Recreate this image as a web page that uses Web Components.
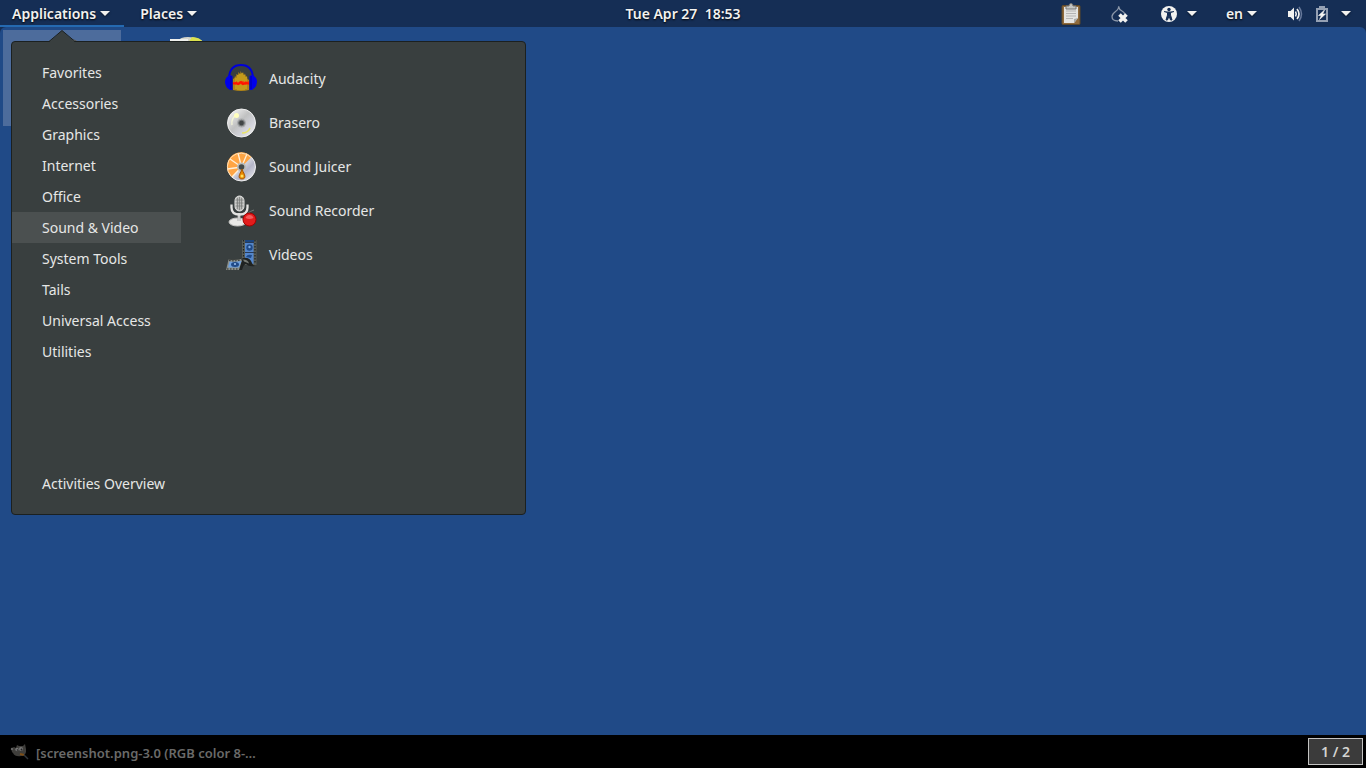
<!DOCTYPE html>
<html lang="en">
<head>
<meta charset="utf-8">
<title>Desktop</title>
<style>
    html, body {
        height: 100%;
        margin: 0;
    }

    body {
        font-family: "Noto Sans", "Open Sans", sans-serif;
        font-size: 14px;
        line-height: 20px;
        color: #e6e7e6;
        background: #204a87;
        --bar: #152e55;
        --menu: #393f3f;
    }
</style>
</head>
<body>
<desktop-shell></desktop-shell>

<script>
const ICONS = {
    clipboard: `<svg width="20" height="22" viewBox="0 0 20 22">
        <rect x="1" y="2.500" width="18" height="19" rx="1" fill="#8f6a3c" stroke="#5f4828"/>
        <path d="M3 4h14v11l-4 5H3z" fill="#e4e4e2"/><path d="M17 15l-4 5v-4z" fill="#a9aaa8"/>
        <path d="M5 8h10M5 10.500h10M5 13h10M5 15.500h7" stroke="#b4b4b4" stroke-width="1"/>
        <path d="M5 6V3h3q0-2.500 2-2.500T12 3h3v3z" fill="#c4c5c2" stroke="#777"/></svg>`,
    onion: `<svg width="20" height="18" viewBox="0 0 20 18">
        <path d="M7.500 1.500c.5 2-1 3.500-3 5S1 9.500 1 11.500C1 14.500 3.500 16 7 16M7.500 1.500C8 4 9 5 11 6s2.500 2 2.800 3" fill="none" stroke="#8b97a9" stroke-width="1.300"/>
        <path d="M8.500 9.500l7 7m0-7l-7 7" stroke="#f2f2f0" stroke-width="3.600"/></svg>`,
    access: `<svg width="16" height="16" viewBox="0 0 16 16">
        <circle cx="8" cy="8" r="8" fill="#f2f2f0"/><circle cx="8" cy="3.500" r="1.700" fill="#152e55"/>
        <path d="M3 5.500l3.500 1v2.500L5 14h1.500L8 10l1.500 4H11L9.500 9V6.500l3.500-1" fill="#152e55" stroke="#152e55"/></svg>`,
    volume: `<svg width="16" height="16" viewBox="0 0 16 16" fill="none" stroke="#f2f2f0">
        <path d="M1 5h2.500L7 1.500v13L3.500 11H1z" fill="#f2f2f0" stroke="none"/>
        <path d="M8.500 5.500q1.500 2.500 0 5" stroke-width="1.500"/><path d="M10 3q4 5 0 10" stroke-width="1.700"/>
        <path d="M12 1q5 7 0 14" stroke="#66789a" stroke-width="1.500"/></svg>`,
    battery: `<svg width="16" height="16" viewBox="0 0 16 16">
        <path d="M5 0h6v2h3v14H2V2h3zM4 4v10h8V4z" fill="#94a0b3" fill-rule="evenodd"/>
        <path d="M10.500 4L4.500 9.500h2.800L5.500 13.500l6-5.500H8.700z" fill="#f5f5f3" stroke="#f5f5f3" stroke-width=".6"/></svg>`,
    audacity: `<svg width="32" height="32" viewBox="0 0 32 32">
        <path d="M8 27V16l1.500-1 .5-2 1 1 .5-3 1.500 1 .5-3 1.500 2 .8-3 1 3 1.200-2 1 3 1-1.500 1 3 1-.5.500 3 1.500 1V27q-8 2-16 0z" fill="#b08416"/>
        <path d="M11 26V15M13 27V12M15 27V11M17 27V10M19 27V12M21 26V14" stroke="#d6b01f"/>
        <path d="M8 19l2 1 1.500-2 1.500 2 2-2 1 1 2-1 1.500 1 1.500-1 1 1 2-1v4l-2-1-1 1-2-1-1.500 1-2-1-1.500 1-2-1-1.500 1-2-1z" fill="#f53a10"/>
        <path d="M8 20.500l3-.5 2 1 3-2 2 2 3-1 3 .5" fill="none" stroke="#ff1500" stroke-width="2"/>
        <path d="M4 15C4.500 6 9 2 16 2s11.500 4 12 13" fill="none" stroke="#0000d8" stroke-width="2"/>
        <path d="M5 12q-5 2-5 7t5 8h2.500V13zM27 12q5 2 5 7t-5 8h-2.500V13z" fill="#0000ed"/><path d="M6 13v13M26 13v13" stroke="#0000a8"/></svg>`,
    brasero: `<svg width="32" height="32" viewBox="0 0 32 32">
        <defs><linearGradient id="silver" x2="1" y2="1"><stop stop-color="#fff"/><stop offset=".45" stop-color="#c0c1c1"/><stop offset=".7" stop-color="#d3d4dc"/><stop offset="1" stop-color="#f2f2ef"/></linearGradient></defs>
        <circle cx="16.500" cy="16" r="14" fill="url(#silver)" stroke="#eee"/>
        <path d="M7 18A9.500 9.500 0 0 1 13 7" fill="none" stroke="#f3f4d8" stroke-width="1.500"/>
        <path d="M17 26q6 0 8-5" fill="none" stroke="#e8e36a" stroke-width="1.500"/>
        <circle cx="11.500" cy="8.500" r="2.500" fill="#ffffbe"/>
        <circle cx="16.500" cy="16" r="4.500" fill="#a8aaac"/><circle cx="16.500" cy="16" r="2.800" fill="#404545" stroke="#727576"/></svg>`,
    juicer: `<svg width="32" height="32" viewBox="0 0 32 32">
        <defs><linearGradient id="disc" x2="1" y2="1"><stop offset=".4" stop-color="#e9e9eb"/><stop offset=".65" stop-color="#b4b5c8"/><stop offset="1" stop-color="#f5f5f5"/></linearGradient></defs>
        <circle cx="16.500" cy="16" r="14" fill="url(#disc)" stroke="#eee"/>
        <path d="M7 26A14 14 0 1 1 26.500 6L16.500 16z" fill="#ffa544"/>
        <path d="M16.500 16L7 26M16.500 16L2.500 18M16.500 16L5 8M16.500 16L13 2M16.500 16L22 3" stroke="#fff0d9" stroke-width="1.300"/>
        <path d="M6 25A13.500 13.500 0 0 1 26 6.500" fill="none" stroke="#ffdfb5"/>
        <circle cx="16.500" cy="16" r="4.500" fill="#b9bbb9"/><circle cx="16.500" cy="16" r="2.800" fill="#454a4a"/>
        <path d="M17 18q-1 3-2.500 5.500Q13 28 17 28t2.500-4.500Q18 21 17 18z" fill="#e88700" stroke="#a55605"/><circle cx="17" cy="25" r="1.500" fill="#ffe05c"/></svg>`,
    recorder: `<svg width="32" height="32" viewBox="0 0 32 32">
        <ellipse cx="12.500" cy="27" rx="8.500" ry="4" fill="#e9e9e7" stroke="#c2c2c0"/>
        <path d="M14 26V18" stroke="#aaa" stroke-width="3"/><path d="M14 26V18" stroke="#eee"/>
        <path d="M6.500 9.500v3q0 7 8 7t8-7v-3" fill="none" stroke="#e3e3e1" stroke-width="2.300"/>
        <rect x="10" y="1" width="9" height="15" rx="4.500" fill="#bbbcba" stroke="#e5e5e3"/>
        <path d="M12.500 3v11M14.500 2v13M16.500 3v11M10.500 5h8M10.500 8h8M10.500 11h8" stroke="#777977" stroke-width=".7"/>
        <path d="M22 19q3-3 7-4" fill="none" stroke="#737876"/>
        <circle cx="24.500" cy="24.500" r="6.500" fill="#e21c1c" stroke="#a40000"/><path d="M20.500 23q1-3 4-3t4 3q-4 2-8 0z" fill="#f25c5c"/></svg>`,
    videos: `<svg width="32" height="32" viewBox="0 0 32 32">
        <path d="M17 1h14.500v25H20q0-6-3-6z" fill="#5a5e57"/><path d="M20 1h8.500v24H20z" fill="#5487cc"/>
        <path d="M18.500 1v19M30 1v24" stroke="#1f2221" stroke-width="1.200" stroke-dasharray="1.500 1.500"/>
        <path d="M20 3.500h9M20 13.500h9" stroke="#283b59"/><path d="M20 1h9v2h-9z" fill="#1b4680"/>
        <circle cx="24.500" cy="8.500" r="3.200" fill="#204a87"/><circle cx="24.500" cy="8" r="1.200" fill="#7cabe4"/>
        <path d="M21 18q1-3 6-2l-1 3z" fill="#204a87"/>
        <path d="M4 20q9 1 14-1 7-1 9 5 1 3 3 3-6 1-9-2-2-1-4 6H1z" fill="#1f2221"/>
        <path d="M3.500 20.500q9 1 14-1L14 31H1z" fill="#8b8f88"/>
        <path d="M4.500 22.500q6 .5 12-.5l-2.500 6.500H3z" fill="#6fa0dc"/><path d="M18 20.500q5 0 6 4l-5-2z" fill="#777b75"/>
        <ellipse cx="10" cy="25.500" rx="4" ry="2.500" fill="#204a87"/><circle cx="10" cy="25" r="1" fill="#9dc5f2"/>
        <path d="M4 21.500q8 1 13-1M2 30h12" fill="none" stroke="#2b2e2d" stroke-dasharray="1.500 1.500"/></svg>`,
    gimp: `<svg width="20" height="18" viewBox="0 0 20 18">
        <path d="M2 4l2-1 2 1 1-3 2 1 4 0 2-2 1 5 0 3q-1 4-5 4-6 1-8-3-2-1-1-5z" fill="#3f3e3b"/>
        <circle cx="7" cy="5.500" r="1.700" fill="#777"/><circle cx="11" cy="5" r="2" fill="#777"/>
        <circle cx="7.500" cy="6" r=".8" fill="#222"/><circle cx="11.500" cy="5.500" r=".9" fill="#222"/>
        <circle cx="2" cy="5" r="1.200" fill="#666"/>
        <path d="M10 10l4 1" stroke="#7c4e18" stroke-width="2"/><path d="M14 11l4 4" stroke="#30353b" stroke-width="1.500"/></svg>`
}

const CATEGORIES = ['Favorites', 'Accessories', 'Graphics', 'Internet', 'Office', 'Sound & Video',
    'System Tools', 'Tails', 'Universal Access', 'Utilities']

const APPS = [
    ['audacity', 'Audacity'],
    ['brasero', 'Brasero'],
    ['juicer', 'Sound Juicer'],
    ['recorder', 'Sound Recorder'],
    ['videos', 'Videos']
]

class ShellIcon extends HTMLElement {
    constructor() {
        super()
        this.attachShadow({ mode: 'open' })
    }

    connectedCallback() {
        this.shadowRoot.innerHTML = `
      <style>
        :host { display: block; flex: none; }
        svg { display: block; }
      </style>
      ${ICONS[this.getAttribute('name')]}
    `
    }
}

class PanelButton extends HTMLElement {
    constructor() {
        super()
        this.attachShadow({ mode: 'open' })
    }

    connectedCallback() {
        const label = this.getAttribute('label')

        this.shadowRoot.innerHTML = `
      <style>
        :host { display: flex; }

        button {
          display: flex;
          align-items: center;
          gap: var(--gap, 4px);
          padding: 0 var(--pad-end, 15px) 0 var(--pad-start, 15px);
          border: 0;
          box-shadow: var(--underline, none);
          background: none;
          color: #f2f2f0;
          font: inherit;
          font-weight: 600;
          text-shadow: 0 1px 2px #000;
          white-space: nowrap;
        }

        :host([active]) { --underline: inset 0 -2px #256ab1; }

        .caret {
          border: 5px solid transparent;
          border-top-color: #f2f2f0;
          border-bottom: 0;
          filter: drop-shadow(0 1px 1px #0008);
        }
      </style>
      <button ${label ? `aria-label="${label}"` : ''}>
        <slot></slot>
        ${this.hasAttribute('menu') ? '<span class="caret"></span>' : ''}
      </button>
    `
    }
}

class TopPanel extends HTMLElement {
    constructor() {
        super()
        this.attachShadow({ mode: 'open' })
        this.shadowRoot.innerHTML = `
      <style>
        :host {
          display: grid;
          grid-template-columns: 1fr auto 1fr;
          grid-template-rows: 27px;
          background: var(--bar);
        }

        div { display: flex; }
        .left { gap: 4px; --pad-start: 12px; --pad-end: 14px; }
        .right { justify-content: flex-end; }
        .status { --gap: 11px; }
        .wide { --gap: 10px; }
        .lang { --pad-start: 14px; }
      </style>
      <div class="left">
        <panel-button active menu>Applications</panel-button>
        <panel-button menu>Places</panel-button>
      </div>
      <panel-button>Tue Apr 27&nbsp; 18:53</panel-button>
      <div class="right">
        <panel-button label="Clipboard"><shell-icon name="clipboard"></shell-icon></panel-button>
        <panel-button label="Onion circuits"><shell-icon name="onion"></shell-icon></panel-button>
        <panel-button class="wide" label="Accessibility" menu><shell-icon name="access"></shell-icon></panel-button>
        <panel-button class="lang" menu>en</panel-button>
        <panel-button class="status" label="System" menu><shell-icon name="volume"></shell-icon><shell-icon name="battery"></shell-icon></panel-button>
      </div>
    `
    }
}

class AppMenu extends HTMLElement {
    constructor() {
        super()
        this.attachShadow({ mode: 'open' })
        this.shadowRoot.innerHTML = `
      <style>
        :host {
          display: grid;
          grid-template-columns: 169px 1fr;
          box-sizing: border-box;
          width: 515px;
          min-height: 474px;
          padding: 15px 0;
          border: 1px solid #1b2020;
          border-radius: 4px;
          background: var(--menu);
        }

        .arrow { position: absolute; top: -12px; left: 37px; }

        nav { display: flex; flex-direction: column; }

        button {
          display: flex;
          align-items: center;
          padding: 0 0 0 30px;
          height: 31px;
          border: 0;
          background: none;
          color: inherit;
          font: inherit;
          white-space: nowrap;
        }

        .current { background: #4b5050; }
        .overview { margin-top: auto; }

        .apps { padding-left: 32px; }

        .apps button {
          height: 44px;
          gap: 12px;
          padding: 0 0 0 12px;
        }
      </style>
      <svg class="arrow" width="26" height="13" viewBox="0 0 26 13">
        <path d="M0 12L13 .5 26 12v1H0z" fill="#393f3f"/>
        <path d="M0 11.500L13 .5l13 11" fill="none" stroke="#1b2020"/>
      </svg>
      <nav>
        ${CATEGORIES.map(name => `<button class="${name === 'Sound & Video' ? 'current' : ''}">${name.replace('&', '&amp;')}</button>`).join('')}
        <button class="overview">Activities Overview</button>
      </nav>
      <nav class="apps">
        ${APPS.map(([icon, name]) => `<button><shell-icon name="${icon}"></shell-icon>${name}</button>`).join('')}
      </nav>
    `
    }
}

class TaskBar extends HTMLElement {
    constructor() {
        super()
        this.attachShadow({ mode: 'open' })
        this.shadowRoot.innerHTML = `
      <style>
        :host {
          display: flex;
          align-items: center;
          justify-content: space-between;
          height: 33px;
          padding: 0 3px 0 10px;
          background: #000;
        }

        button {
          font: inherit;
          font-weight: 600;
          box-sizing: border-box;
        }

        .task {
          display: flex;
          align-items: center;
          gap: 6px;
          padding: 2px 0 0;
          border: 0;
          background: none;
          color: #6a6a69;
          font-size: 13px;
        }

        .workspace {
          width: 55px;
          height: 27px;
          padding: 0;
          border: 1px solid #c4c4c3;
          background: #3b3b3b;
          color: #d3d3d1;
        }
      </style>
      <button class="task"><shell-icon name="gimp"></shell-icon>[screenshot.png-3.0 (RGB color 8-…</button>
      <button class="workspace">1 / 2</button>
    `
    }
}

class DesktopShell extends HTMLElement {
    constructor() {
        super()
        this.attachShadow({ mode: 'open' })
        this.shadowRoot.innerHTML = `
      <style>
        :host {
          display: flex;
          flex-direction: column;
          min-height: 100vh;
          background: var(--bar);
        }

        main {
          position: relative;
          flex: 1;
          border-radius: 6px 6px 0 0;
          background: #204a87;
        }

        .selected {
          position: absolute;
          top: 3px;
          left: 3px;
          width: 118px;
          height: 96px;
          background: #4d6c9c;
        }

        .disc { position: absolute; top: 9px; left: 168px; }
        .home { position: absolute; top: 12px; left: 46px; }

        app-menu { position: absolute; top: 14px; left: 11px; }
      </style>
      <top-panel></top-panel>
      <main>
        <div class="selected"></div>
        <svg class="home" width="34" height="6"><path d="M1 5q2-4 5-4h22q3 0 5 4" fill="#c9ccc8" stroke="#555"/></svg>
        <svg class="disc" width="38" height="10" viewBox="0 0 38 10">
          <path d="M10 5q2-4 10-4 12 0 16 6H10z" fill="#d5d6cc"/>
          <path d="M24 1q8 0 12 6H20z" fill="#dbe14e"/>
          <path d="M2 3h18v5H2z" fill="#eef0ed"/>
        </svg>
        <app-menu></app-menu>
      </main>
      <task-bar></task-bar>
    `
    }
}

customElements.define('shell-icon', ShellIcon)
customElements.define('panel-button', PanelButton)
customElements.define('top-panel', TopPanel)
customElements.define('app-menu', AppMenu)
customElements.define('task-bar', TaskBar)
customElements.define('desktop-shell', DesktopShell)
</script>
</body>
</html>
